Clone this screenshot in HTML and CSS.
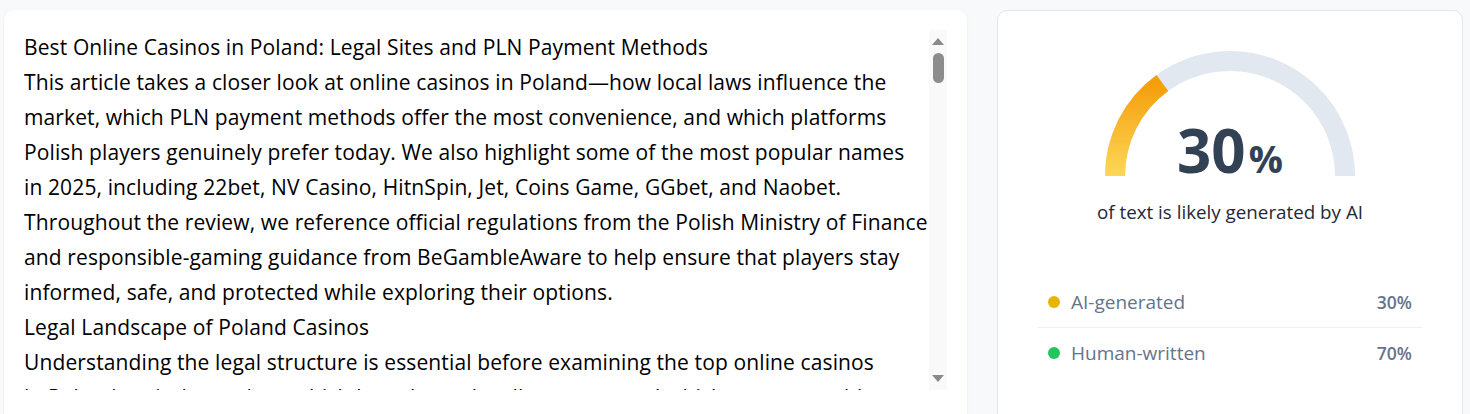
FILE: index.html
```html
<!DOCTYPE html>
<html lang="en">
<head>
<meta charset="utf-8">
<title>AI Detector</title>
<link rel="stylesheet" href="styles.css">
</head>
<body>
<main class="layout">
  <section class="editor-card">
    <div class="editor">
      <div class="editor-text">
        <p>Best Online Casinos in Poland: Legal Sites and PLN Payment Methods</p>
        <p>This article takes a closer look at online casinos in Poland—how local laws influence the<br>market, which PLN payment methods offer the most convenience, and which platforms<br>Polish players genuinely prefer today. We also highlight some of the most popular names<br>in 2025, including 22bet, NV Casino, HitnSpin, Jet, Coins Game, GGbet, and Naobet.<br>Throughout the review, we reference official regulations from the Polish Ministry of Finance<br>and responsible-gaming guidance from BeGambleAware to help ensure that players stay<br>informed, safe, and protected while exploring their options.</p>
        <p>Legal Landscape of Poland Casinos</p>
        <p>Understanding the legal structure is essential before examining the top online casinos<br>in Poland, as it determines which brands can legally operate and which ones to avoid.</p>
      </div>
      <div class="scrollbar">
        <span class="arrow arrow-up"></span>
        <span class="thumb"></span>
        <span class="track-space"></span>
        <span class="arrow arrow-down"></span>
      </div>
    </div>
  </section>
  <aside class="result-card">
    <div class="gauge">
      <svg class="gauge-svg" width="270" height="140" viewBox="0 0 270 140">
        <defs>
          <linearGradient id="ai-grad" x1="0" y1="1" x2="0" y2="0">
            <stop offset="0" stop-color="#fdd758"/>
            <stop offset="1" stop-color="#f59e0b"/>
          </linearGradient>
        </defs>
        <path d="M 20 130 A 115 115 0 0 1 250 130" fill="none" stroke="#e2e8f0" stroke-width="20"/>
        <path d="M 20 130 A 115 115 0 0 1 67.4 37" fill="none" stroke="url(#ai-grad)" stroke-width="20"/>
      </svg>
      <div class="gauge-value"><span class="num">30</span><span class="pct">%</span></div>
    </div>
    <p class="caption">of text is likely generated by AI</p>
    <ul class="legend">
      <li class="legend-row"><span class="dot dot-ai"></span><span class="label">AI-generated</span><span class="value">30%</span></li>
      <li class="legend-row"><span class="dot dot-human"></span><span class="label">Human-written</span><span class="value">70%</span></li>
    </ul>
  </aside>
</main>
</body>
</html>
```
FILE: styles.css
```css
* { box-sizing: border-box; }

html, body {
  margin: 0;
  padding: 0;
  background: #f8f9fb;
  font-family: "Open Sans", "Noto Sans", "Liberation Sans", sans-serif;
  overflow: hidden;
}

.layout {
  display: flex;
  align-items: flex-start;
  gap: 30px;
  padding: 10px 7px 0 4px;
}

.editor-card {
  width: 963px;
  height: 430px;
  flex: none;
  background: #ffffff;
  border-radius: 10px;
  box-shadow: 0 1px 3px rgba(15, 23, 42, 0.07);
  padding: 20px 20px 0 20px;
}

.editor {
  display: flex;
  height: 360px;
}

.editor-text {
  flex: 1;
  overflow: hidden;
  color: #000000;
  font-size: 21px;
  letter-spacing: 0.12px;
  line-height: 35px;
  white-space: nowrap;
}

.editor-text p {
  margin: 0;
}

.scrollbar {
  width: 18px;
  flex: none;
  background: #f9f9f9;
  display: flex;
  flex-direction: column;
  align-items: center;
  padding: 8px 0 8px 0;
}

.arrow {
  width: 0;
  height: 0;
  border-left: 6px solid transparent;
  border-right: 6px solid transparent;
}

.arrow-up {
  border-bottom: 7px solid #8a8a8a;
}

.arrow-down {
  border-top: 7px solid #8a8a8a;
}

.thumb {
  margin-top: 8px;
  width: 11px;
  height: 30px;
  border-radius: 6px;
  background: #8c8c8c;
}

.track-space {
  flex: 1;
}

.result-card {
  width: 466px;
  height: 430px;
  flex: none;
  background: #ffffff;
  border: 1px solid #e2e8f0;
  border-radius: 10px;
  padding: 35px 40px 0 40px;
}

.gauge {
  position: relative;
  width: 270px;
  height: 140px;
  margin: 0 auto;
}

.gauge-svg {
  display: block;
}

.gauge-value {
  position: absolute;
  left: 0;
  right: 0;
  bottom: 6px;
  text-align: center;
  color: #334155;
  font-weight: 700;
  line-height: 1;
}

.gauge-value .num {
  font-size: 60px;
}

.gauge-value .pct {
  font-size: 38px;
  margin-left: 3px;
}

.caption {
  margin: 14px 0 0 0;
  text-align: center;
  font-size: 18.8px;
  line-height: 24px;
  color: #1f2937;
}

.legend {
  list-style: none;
  margin: 53px 0 0 0;
  padding: 0;
}

.legend-row {
  display: flex;
  align-items: center;
  height: 50px;
  padding: 0 10px;
  font-size: 19px;
  color: #64748b;
}

.legend-row + .legend-row {
  border-top: 1px solid #edf1f5;
  height: 51px;
}

.dot {
  width: 12px;
  height: 12px;
  border-radius: 50%;
  flex: none;
  margin-right: 11px;
}

.dot-ai { background: #eab308; }
.dot-human { background: #22c55e; }

.label { flex: 1; }

.value {
  font-size: 17.5px;
  font-weight: 600;
  color: #64748b;
}
```
